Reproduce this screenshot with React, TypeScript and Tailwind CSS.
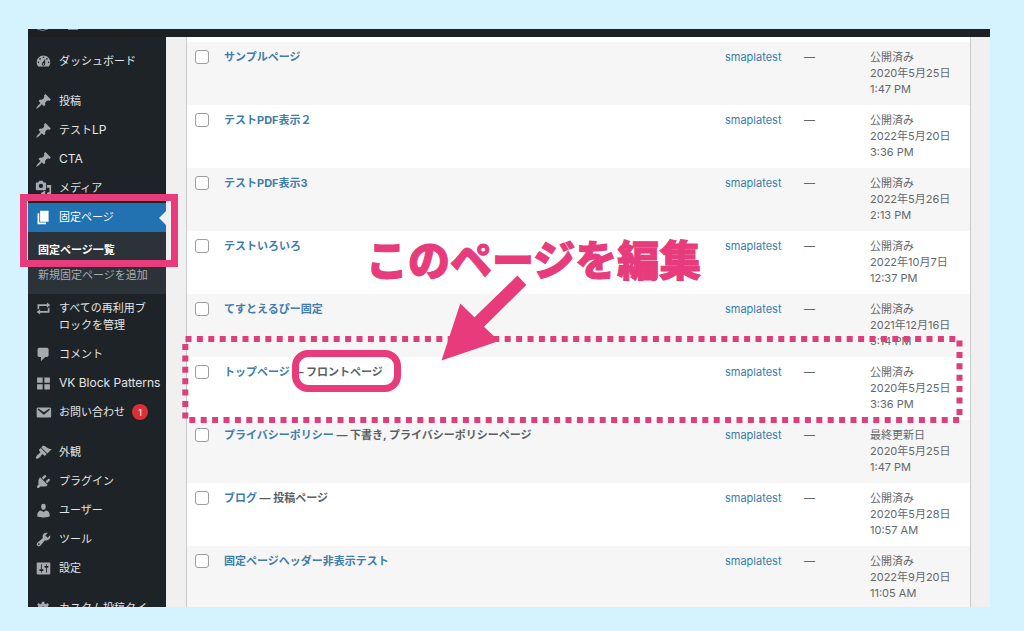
import type { ReactNode } from "react";

const icons = {
  dashboard:
    "M3.76 16h12.48c1.1-1.37 1.76-3.11 1.76-5 0-4.42-3.58-8-8-8s-8 3.58-8 8c0 1.89.66 3.63 1.76 5zM10 4c.55 0 1 .45 1 1s-.45 1-1 1-1-.45-1-1 .45-1 1-1zM6 6c.55 0 1 .45 1 1s-.45 1-1 1-1-.45-1-1 .45-1 1-1zm8 0c.55 0 1 .45 1 1s-.45 1-1 1-1-.45-1-1 .45-1 1-1zm-5.37 5.55L12 7v6c0 1.1-.9 2-2 2s-2-.9-2-2c0-.57.24-1.08.63-1.45zM4 10c.55 0 1 .45 1 1s-.45 1-1 1-1-.45-1-1 .45-1 1-1zm12 0c.55 0 1 .45 1 1s-.45 1-1 1-1-.45-1-1 .45-1 1-1zm-5 3c0-.55-.45-1-1-1s-1 .45-1 1 .45 1 1 1 1-.45 1-1z",
  pin: "M10.44 3.02l1.82-1.82 6.36 6.35-1.83 1.82c-1.05-.68-2.48-.57-3.41.36l-.75.75c-.92.93-1.04 2.35-.35 3.41l-1.83 1.82-2.41-2.41-2.8 2.79c-.42.42-3.38 2.71-3.8 2.29s1.86-3.39 2.28-3.81l2.79-2.79L4.1 9.36l1.83-1.82c1.05.69 2.48.57 3.4-.36l.75-.75c.93-.92 1.05-2.35.36-3.41z",
  media:
    "M13 11V4c0-.55-.45-1-1-1h-1.67L9 1H5L3.67 3H2c-.55 0-1 .45-1 1v7c0 .55.45 1 1 1h10c.55 0 1-.45 1-1zM7 4.5c1.38 0 2.5 1.12 2.5 2.5S8.38 9.5 7 9.5 4.5 8.38 4.5 7 5.62 4.5 7 4.5zM14 6h5v10.5c0 1.38-1.12 2.5-2.5 2.5S14 17.88 14 16.5s1.12-2.5 2.5-2.5c.17 0 .34.02.5.05V9h-3V6zm-4 8.05V13h2v3.5c0 1.38-1.12 2.5-2.5 2.5S7 17.88 7 16.5 8.12 14 9.5 14c.17 0 .34.02.5.05z",
  page: "M6 15V2h10v13H6zm-1 1h8v2H3V5h2v11z",
  repeat: "M5 7v3l-2 1.5V5h11V3l4 3.01L14 9V7H5zm10 6v-3l2-1.5V15H6v2l-4-3.01L6 11v2h9z",
  comment: "M5 2h9c1.1 0 2 .9 2 2v7c0 1.1-.9 2-2 2h-2l-5 5v-5H5c-1.1 0-2-.9-2-2V4c0-1.1.9-2 2-2z",
  grid: "M2.500 3h6.500v6H2.500zM11 3h6.500v6H11zM2.500 11h6.500v6H2.500zM11 11h6.500v6H11z",
  email:
    "M3.87 4h13.25C18.37 4 19 4.59 19 5.79v8.42c0 1.19-.63 1.79-1.88 1.79H3.87c-1.25 0-1.88-.6-1.88-1.79V5.79c0-1.2.63-1.79 1.88-1.79zm6.62 8.6l6.74-5.53c.24-.2.43-.66.13-1.07-.29-.41-.82-.42-1.17-.17l-5.7 3.86L4.8 5.83c-.35-.25-.88-.24-1.17.17-.3.41-.11.87.13 1.07z",
  appearance:
    "M14.48 11.06L7.41 3.99l1.5-1.5c.5-.56 2.3-.47 3.51.32 1.21.8 1.43 1.28 2.91 2.1 1.18.64 2.45 1.26 4.45.85zm-.71.71L6.7 4.7 4.93 6.47c-.39.39-.39 1.02 0 1.41l1.06 1.06c.39.39.39 1.03 0 1.42-.6.6-1.43 1.11-2.21 1.69-.35.26-.7.53-1.01.84C1.43 14.23.4 16.08 1.4 17.07c.99 1 2.84-.03 4.18-1.36.31-.31.58-.66.85-1.02.57-.78 1.08-1.61 1.69-2.21.39-.39 1.02-.39 1.41 0l1.06 1.06c.39.39 1.02.39 1.41 0z",
  plugin:
    "M13.11 4.36L9.87 7.6 8 5.73l3.24-3.24c.35-.34 1.05-.2 1.56.32.52.51.66 1.21.31 1.55zm-8 1.77l.91-1.12 9.01 9.01-1.19.84c-.71.71-2.63 1.16-3.82 1.16H6.14L4.9 17.26c-.59.59-1.54.59-2.12 0-.59-.58-.59-1.53 0-2.12l1.24-1.24v-3.88c0-1.13.4-3.19 1.09-3.89zm7.26 3.97l3.24-3.24c.34-.35 1.04-.21 1.55.31.52.51.66 1.21.31 1.55l-3.24 3.25z",
  user: "M10 9.25c-2.27 0-2.73-3.44-2.73-3.44C7 4.02 7.82 2 9.97 2c2.16 0 2.98 2.02 2.71 3.81 0 0-.41 3.44-2.68 3.44zm0 2.57L12.72 10c2.39 0 4.52 2.33 4.52 4.53v2.49s-3.65 1.13-7.24 1.13c-3.65 0-7.24-1.13-7.24-1.13v-2.49c0-2.25 1.94-4.48 4.47-4.48z",
  tool: "M16.68 9.77c-1.34 1.34-3.3 1.67-4.95.99l-5.41 6.52c-.99.99-2.59.99-3.58 0s-.99-2.59 0-3.57l6.52-5.42c-.68-1.65-.35-3.61.99-4.95 1.28-1.28 3.12-1.62 4.72-1.06l-2.89 2.89 2.82 2.82 2.86-2.87c.53 1.58.18 3.39-1.08 4.65zM3.81 16.21c.4.39 1.04.39 1.43 0 .4-.4.4-1.04 0-1.43-.39-.4-1.03-.4-1.43 0-.39.39-.39 1.03 0 1.43z",
  settings:
    "M18 16V4c0-.55-.45-1-1-1H3c-.55 0-1 .45-1 1v12c0 .55.45 1 1 1h14c.55 0 1-.45 1-1zM8 11h1c.55 0 1 .45 1 1s-.45 1-1 1H8v1.5c0 .28-.22.5-.5.5s-.5-.22-.5-.5V13H6c-.55 0-1-.45-1-1s.45-1 1-1h1V5.5c0-.28.22-.5.5-.5s.5.22.5.5V11zm5-2h-1c-.55 0-1-.45-1-1s.45-1 1-1h1V5.5c0-.28.22-.5.5-.5s.5.22.5.5V7h1c.55 0 1 .45 1 1s-.45 1-1 1h-1v5.5c0 .28-.22.5-.5.5s-.5-.22-.5-.5V9z",
  gear: "M18 12h-2.18c-.17.7-.44 1.35-.81 1.93l1.54 1.54-2.1 2.1-1.54-1.54c-.58.36-1.23.63-1.91.79V19H8v-2.18c-.68-.16-1.33-.43-1.91-.79l-1.54 1.54-2.12-2.12 1.54-1.54c-.36-.58-.63-1.23-.79-1.91H1V9.03h2.17c.16-.7.44-1.35.8-1.94L2.43 5.55l2.1-2.1 1.54 1.54c.58-.37 1.24-.64 1.93-.81V2h3v2.18c.68.16 1.33.43 1.91.79l1.54-1.54 2.12 2.12-1.54 1.54c.36.59.64 1.24.8 1.94H18V12zm-8.5 1.5c1.66 0 3-1.34 3-3s-1.34-3-3-3-3 1.34-3 3 1.34 3 3 3z",
};

type IconName = keyof typeof icons;

function MenuItem({
  icon,
  children,
  badge,
  current = false,
}: {
  icon: IconName;
  children: ReactNode;
  badge?: number;
  current?: boolean;
}) {
  return (
    <li>
      <a
        href="#"
        aria-current={current ? "true" : undefined}
        className={
          current
            ? "relative flex items-start gap-[7px] bg-[#2271b1] py-[6px] pl-[7px] text-white"
            : "relative flex items-start gap-[7px] py-[6px] pl-[7px] text-[#e4e5e6]"
        }
      >
        <svg
          viewBox="0 0 20 20"
          fillRule="evenodd"
          aria-hidden="true"
          className={
            current
              ? "size-[17px] shrink-0 fill-white"
              : "size-[17px] shrink-0 fill-[#a7aaad]"
          }
        >
          <path d={icons[icon]} />
        </svg>
        <span className="whitespace-nowrap">{children}</span>
        {badge !== undefined && (
          <span className="flex size-4 shrink-0 items-center justify-center rounded-full bg-[#dc2f36] text-[9px] text-white">
            {badge}
          </span>
        )}
        {current && (
          <svg
            viewBox="0 0 7 14"
            aria-hidden="true"
            className="absolute top-2 right-0 h-[14px] w-[7px] fill-[#f0f0f1]"
          >
            <path d="M7 0v14L0 7z" />
          </svg>
        )}
      </a>
    </li>
  );
}

function Sidebar() {
  return (
    <nav
      aria-label="メインメニュー"
      className="w-[138px] shrink-0 bg-[#1d2327] pt-[10px] text-[11px] leading-[17px]"
    >
      <ul>
        <MenuItem icon="dashboard">ダッシュボード</MenuItem>
      </ul>
      <ul className="mt-[11px]">
        <MenuItem icon="pin">投稿</MenuItem>
        <MenuItem icon="pin">
          テスト<span className="text-xs leading-none">LP</span>
        </MenuItem>
        <MenuItem icon="pin">
          <span className="text-xs leading-none">CTA</span>
        </MenuItem>
        <MenuItem icon="media">メディア</MenuItem>
        <MenuItem icon="page" current>
          固定ページ
        </MenuItem>
        <li className="bg-[#2c3338] py-[10px] pl-[10px]">
          <ul>
            <li className="pb-[8px]">
              <a href="#" className="font-bold text-white">
                固定ページ一覧
              </a>
            </li>
            <li>
              <a href="#" className="text-[#a9adb1]">
                新規固定ページを追加
              </a>
            </li>
          </ul>
        </li>
        <MenuItem icon="repeat">
          すべての再利用ブ
          <br />
          ロックを管理
        </MenuItem>
        <MenuItem icon="comment">コメント</MenuItem>
        <MenuItem icon="grid">
          <span className="text-xs leading-none">VK Block Patterns</span>
        </MenuItem>
        <MenuItem icon="email" badge={1}>
          お問い合わせ
        </MenuItem>
      </ul>
      <ul className="mt-[11px]">
        <MenuItem icon="appearance">外観</MenuItem>
        <MenuItem icon="plugin">プラグイン</MenuItem>
        <MenuItem icon="user">ユーザー</MenuItem>
        <MenuItem icon="tool">ツール</MenuItem>
        <MenuItem icon="settings">設定</MenuItem>
      </ul>
      <ul className="mt-[11px]">
        <MenuItem icon="gear">カスタム投稿タイ</MenuItem>
      </ul>
    </nav>
  );
}

interface PageRow {
  title: string;
  state?: string;
  status?: string;
  date: string;
  time: string;
}

const pages: PageRow[] = [
  { title: "サンプルページ", date: "2020年5月25日", time: "1:47 PM" },
  { title: "テストPDF表示２", date: "2022年5月20日", time: "3:36 PM" },
  { title: "テストPDF表示3", date: "2022年5月26日", time: "2:13 PM" },
  { title: "テストいろいろ", date: "2022年10月7日", time: "12:37 PM" },
  { title: "てすとえるぴー固定", date: "2021年12月16日", time: "5:14 PM" },
  { title: "トップページ", state: "フロントページ", date: "2020年5月25日", time: "3:36 PM" },
  {
    title: "プライバシーポリシー",
    state: "下書き, プライバシーポリシーページ",
    status: "最終更新日",
    date: "2020年5月25日",
    time: "1:47 PM",
  },
  { title: "ブログ", state: "投稿ページ", date: "2020年5月28日", time: "10:57 AM" },
  { title: "固定ページヘッダー非表示テスト", date: "2022年9月20日", time: "11:05 AM" },
];

function PagesTable() {
  return (
    <div className="mr-[19px] ml-5 min-w-0 flex-1 border-x border-[#c9cacc] bg-white pt-[5px]">
      <table className="w-full table-fixed text-left text-[11px] leading-4 text-[#64686d]">
        <colgroup>
          <col className="w-[37px]" />
          <col />
          <col className="w-[79px]" />
          <col className="w-[66px]" />
          <col className="w-[100px]" />
        </colgroup>
        <tbody>
          {pages.map((page) => (
            <tr key={page.title} className="h-[63px] align-top odd:bg-[#f6f6f6]">
              <td className="pt-[8px] pl-[8px]">
                <input
                  type="checkbox"
                  aria-label={`${page.title}を選択`}
                  className="block size-[14px] appearance-none rounded-[3px] border border-[#9a9da1] bg-white"
                />
              </td>
              <td className="pt-[7px] font-bold">
                <a href="#" className="text-[#3f7cab]">
                  {page.title}
                </a>
                {page.state && <span className="text-[#5b5f64]"> — {page.state}</span>}
              </td>
              <td className="pt-[7px]">
                <a href="#" className="text-[#3a7cab]">
                  smaplatest
                </a>
              </td>
              <td className="pt-[7px]">—</td>
              <td className="pt-[7px] whitespace-nowrap">
                {page.status ?? "公開済み"}
                <br />
                {page.date}
                <br />
                {page.time}
              </td>
            </tr>
          ))}
        </tbody>
      </table>
    </div>
  );
}

function Annotations() {
  return (
    <div className="pointer-events-none absolute inset-0">
      <div className="absolute top-[165px] -left-2 h-[73px] w-[158px] border-7 border-[#e73b7b]" />
      <svg
        aria-hidden="true"
        className="absolute top-[307px] left-[154px] h-[88px] w-[781px] stroke-[#dd3f7c]"
        strokeWidth="6"
        strokeDasharray="6 5.4"
      >
        <line x1="3.5" y1="3" x2="774" y2="3" />
        <line x1="3.3" y1="8" x2="3.3" y2="83" />
        <line x1="7.3" y1="84" x2="777.5" y2="84" />
        <line x1="777.5" y1="4.5" x2="777.5" y2="79" />
      </svg>
      <div className="absolute top-[321px] left-[264px] h-[42px] w-[109px] rounded-2xl border-7 border-[#e73b7b]" />
      <svg
        viewBox="0 0 86 86"
        aria-hidden="true"
        className="absolute top-[246px] left-[413px] size-[86px] fill-[#e73b7b]"
      >
        <path d="M.5 85.5 19.3 28.5 33.5 42.3 76.5 .5 85.3 10 43 51.7 58 66z" />
      </svg>
      <p className="absolute top-[203px] left-[338px] text-[42px] leading-[58px] font-black whitespace-nowrap text-[#e73b7b] [-webkit-text-stroke:1px_#e73b7b]">
        このページを編集
      </p>
    </div>
  );
}

export default function App() {
  return (
    <div className="flex h-screen flex-col bg-[#d4f3fe] pt-[29px] pr-[34px] pb-6 pl-7 font-[Inter,'Noto_Sans_CJK_JP',sans-serif]">
      <div className="relative flex min-h-0 flex-1 flex-col">
        <div className="flex min-h-0 flex-1 flex-col overflow-hidden bg-[#f0f0f1]">
          <header className="h-2 shrink-0 bg-[#1d2023]">
            <svg
              viewBox="0 0 60 8"
              aria-hidden="true"
              className="h-2 w-[60px] fill-none stroke-[#85898d]"
            >
              <path d="M9 0q5.500 3 11 0M40 .5h10" />
            </svg>
          </header>
          <div className="flex min-h-0 flex-1 items-start">
            <Sidebar />
            <PagesTable />
          </div>
        </div>
        <Annotations />
      </div>
    </div>
  );
}
